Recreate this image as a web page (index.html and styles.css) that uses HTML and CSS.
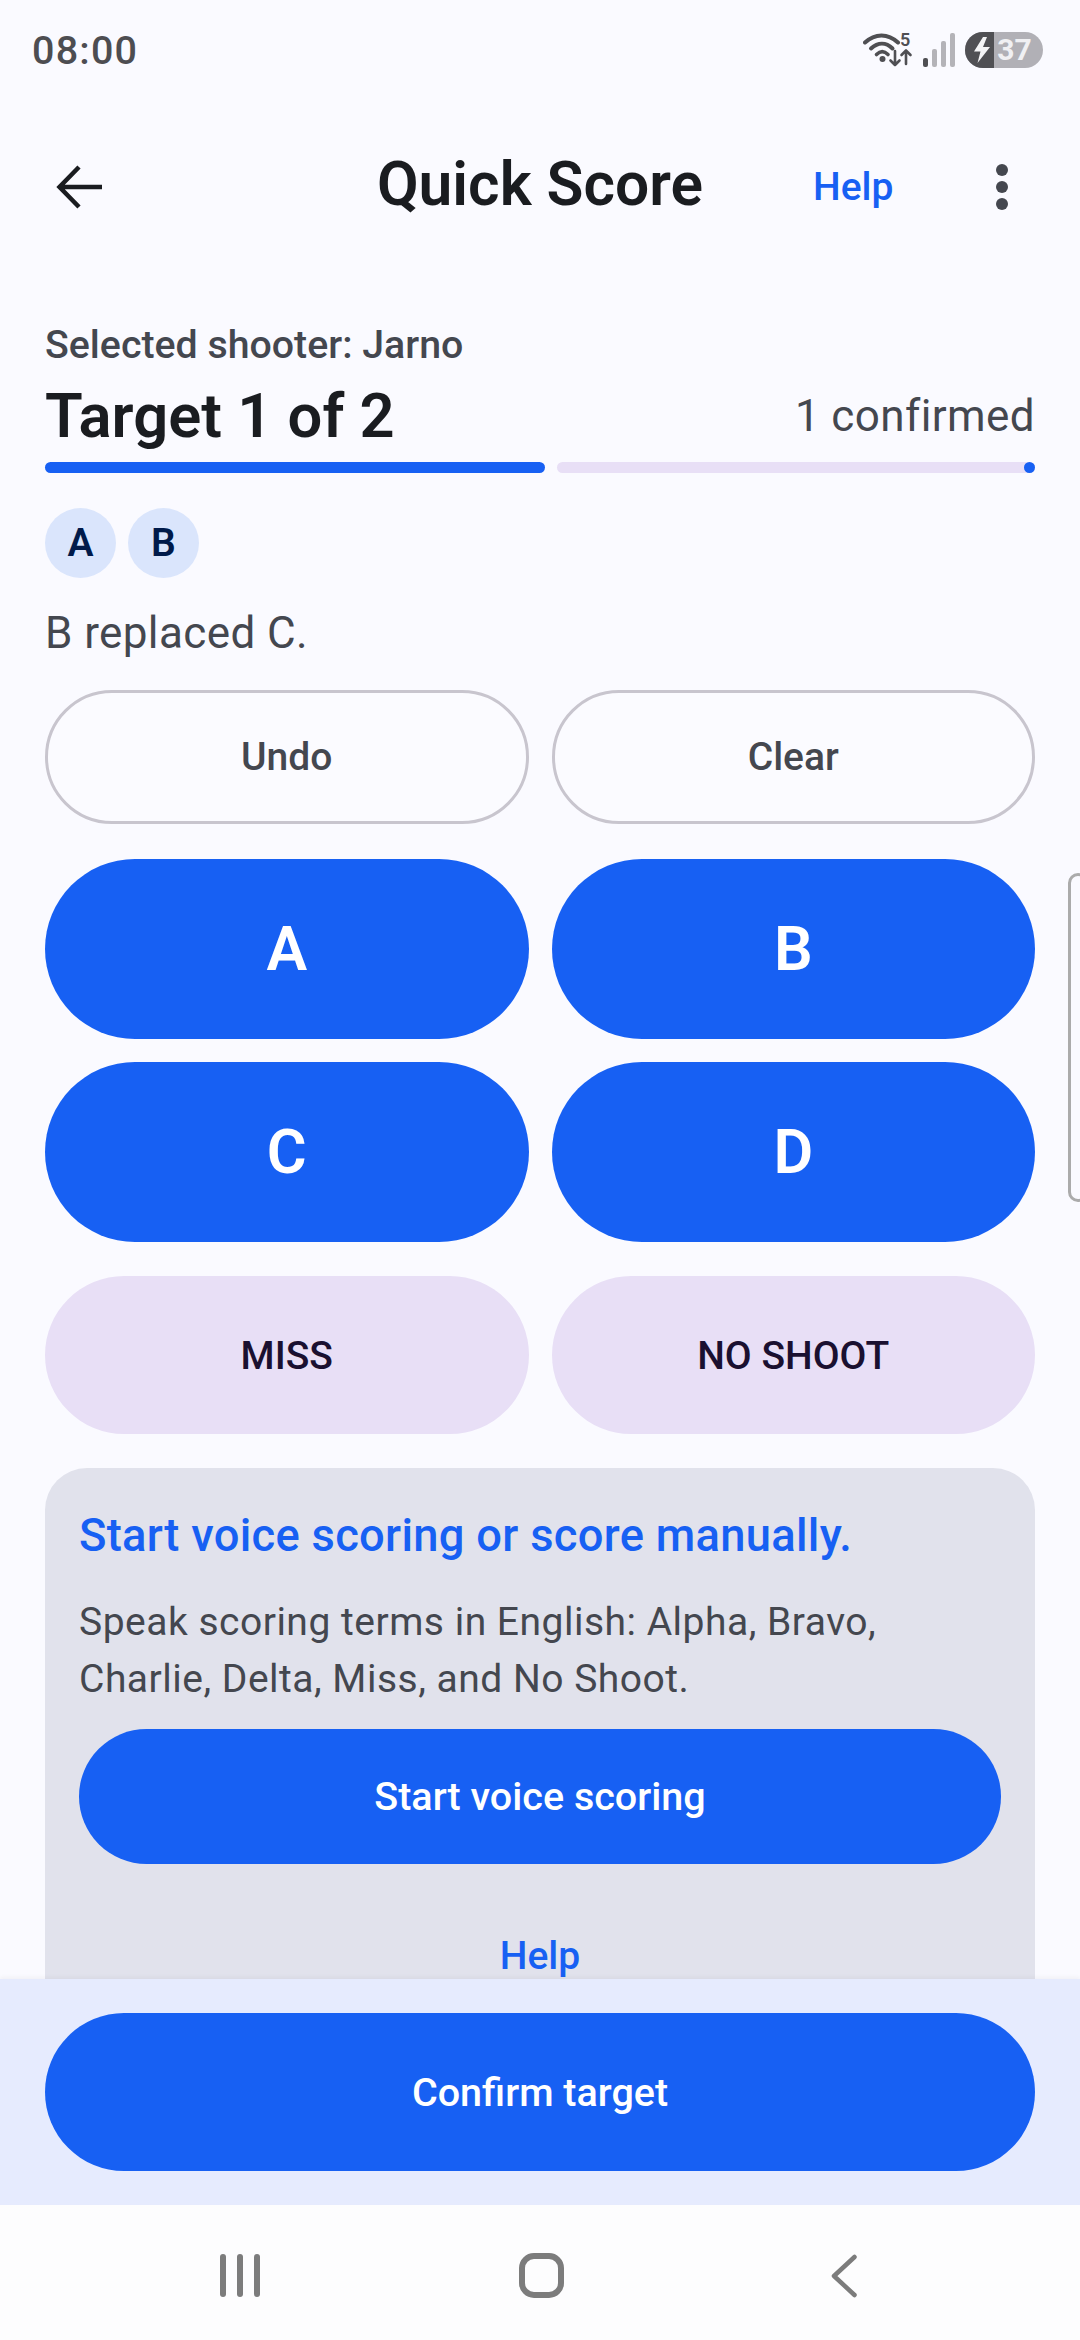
FILE: index.html
```html
<!DOCTYPE html>
<html lang="en">
<head>
<meta charset="utf-8">
<title>Quick Score</title>
<link rel="stylesheet" href="styles.css">
</head>
<body>
<div class="screen">
  <header class="status">
    <span class="clock">08:00</span>
    <div class="status-icons">
      <div class="wifi">
        <svg width="50" height="36" viewBox="0 0 50 36" fill="none">
          <path d="M2 10.500C12 1 25 1 35 10.500" stroke="#4f4f53" stroke-width="4" stroke-linecap="round"/>
          <path d="M8 16.500C15 10 23 10 29.500 16.500" stroke="#4f4f53" stroke-width="4" stroke-linecap="round"/>
          <path d="M13.500 22.500C17.500 18.500 21 18.500 25 22.500" stroke="#4f4f53" stroke-width="3.600" stroke-linecap="round"/>
          <circle cx="19.500" cy="27" r="3" fill="#4f4f53"/>
          <path d="M32 19V33M27.500 28.500L32 33L36.500 28.500" stroke="#4f4f53" stroke-width="2.600" stroke-linecap="round" stroke-linejoin="round"/>
          <path d="M43 32V18.500M38.500 23L43 18.500L47.500 23" stroke="#4f4f53" stroke-width="2.600" stroke-linecap="round" stroke-linejoin="round"/>
        </svg>
        <span class="wifi-gen">5</span>
      </div>
      <svg class="signal" width="32" height="34" viewBox="0 0 32 34">
        <rect x="0" y="25" width="5" height="9" rx="2" fill="#4f4f53"/>
        <rect x="9" y="16" width="5" height="18" rx="2" fill="#b4b3b8"/>
        <rect x="18" y="8" width="5" height="26" rx="2" fill="#b4b3b8"/>
        <rect x="27" y="0" width="5" height="34" rx="2" fill="#b4b3b8"/>
      </svg>
      <div class="battery">
        <div class="battery-charge">
          <svg width="18" height="26" viewBox="0 0 18 26"><path d="M10 0L1 14.500H7.500L4.500 26L17 10H10L14 0Z" fill="#f4f4f6"/></svg>
        </div>
        <span class="battery-level">37</span>
      </div>
    </div>
  </header>

  <nav class="topbar">
    <svg class="back" width="46" height="46" viewBox="0 0 46 46" fill="none">
      <path d="M46 23H4M23 3L3.500 23L23 43" stroke="#1a1c20" stroke-width="4.500" stroke-linejoin="miter"/>
    </svg>
    <h1 class="title">Quick Score</h1>
    <span class="top-help">Help</span>
    <div class="kebab"><i></i><i></i><i></i></div>
  </nav>

  <main class="content">
    <p class="shooter">Selected shooter: Jarno</p>
    <div class="target-row">
      <h2 class="target">Target 1 of 2</h2>
      <span class="confirmed">1 confirmed</span>
    </div>
    <div class="progress">
      <div class="progress-done"></div>
      <div class="progress-rest"><i></i></div>
    </div>
    <div class="chips">
      <span class="chip">A</span>
      <span class="chip">B</span>
    </div>
    <p class="note">B replaced C.</p>
    <div class="grid actions">
      <button class="btn outline">Undo</button>
      <button class="btn outline">Clear</button>
    </div>
    <div class="grid letters">
      <button class="btn letter">A</button>
      <button class="btn letter">B</button>
      <button class="btn letter">C</button>
      <button class="btn letter">D</button>
    </div>
    <div class="grid outcomes">
      <button class="btn tonal">MISS</button>
      <button class="btn tonal">NO SHOOT</button>
    </div>
    <section class="card">
      <h3 class="card-title">Start voice scoring or score manually.</h3>
      <p class="card-text">Speak scoring terms in English: Alpha, Bravo, Charlie, Delta, Miss, and No Shoot.</p>
      <button class="btn voice">Start voice scoring</button>
      <button class="card-help">Help</button>
    </section>
  </main>

  <footer class="action-bar">
    <button class="btn confirm">Confirm target</button>
  </footer>

  <div class="navbar">
    <div class="recents"><i></i><i></i><i></i></div>
    <div class="home"></div>
    <svg width="26" height="44" viewBox="0 0 26 44" fill="none"><path d="M23.500 3L3 22L23.500 41" stroke="#7c7c7c" stroke-width="4.500" stroke-linecap="round" stroke-linejoin="round"/></svg>
  </div>

  <div class="edge-handle"></div>
</div>
</body>
</html>
```
FILE: styles.css
```css
* { box-sizing: border-box; margin: 0; padding: 0; }
html, body { width: 1080px; height: 2340px; overflow: hidden; }
body { font-family: Roboto, "Noto Sans", sans-serif; background: #fafaff; color: #1a1c20; }
button { font-family: inherit; border: 0; background: none; }

.screen { position: relative; width: 1080px; height: 2340px; display: flex; flex-direction: column; }

.status { height: 100px; flex: none; display: flex; align-items: center; justify-content: space-between; padding: 0 37px 0 32px; }
.clock { font-size: 39.500px; font-weight: 500; letter-spacing: 1.200px; color: #4d4d51; }
.status-icons { display: flex; align-items: center; gap: 10px; }
.wifi { position: relative; width: 50px; height: 36px; }
.wifi svg { display: block; }
.wifi-gen { position: absolute; left: 37px; top: -1px; font-size: 18px; font-weight: 600; line-height: 18px; color: #4f4f53; }
.battery { width: 78px; height: 36px; border-radius: 18px; overflow: hidden; display: flex; background: #b1b0b6; }
.battery-charge { width: 29px; background: #505054; display: flex; align-items: center; justify-content: flex-end; padding-right: 3px; }
.battery-level { flex: 1; text-align: center; font-size: 30px; font-weight: 700; line-height: 36px; color: #f0f0f3; padding-right: 8px; }

.topbar { height: 168px; flex: none; position: relative; display: flex; align-items: center; padding: 5px 0 0 56px; }
.title { position: absolute; left: 0; right: 0; text-align: center; font-size: 60.500px; font-weight: 600; line-height: 70px; padding-bottom: 3px; }
.top-help { position: absolute; left: 813px; font-size: 39px; font-weight: 500; color: #1760f3; }
.kebab { position: absolute; left: 996px; display: flex; flex-direction: column; gap: 5px; }
.kebab i { display: block; width: 12px; height: 12px; border-radius: 50%; background: #44474f; }

.content { flex: 1; min-height: 0; overflow: hidden; padding: 55px 45px 0; }
.shooter { font-size: 39.300px; font-weight: 500; line-height: 44px; color: #44474f; }
.target-row { display: flex; justify-content: space-between; align-items: center; margin-top: 15px; height: 68px; }
.target { font-size: 61.500px; font-weight: 600; line-height: 68px; }
.confirmed { font-size: 44px; color: #44474f; letter-spacing: 0.4px; }
.progress { display: flex; gap: 12px; height: 11px; margin-top: 12px; }
.progress-done { width: 500px; background: #1760f3; border-radius: 6px; }
.progress-rest { flex: 1; background: #e8dff6; border-radius: 6px; display: flex; justify-content: flex-end; }
.progress-rest i { width: 11px; height: 11px; border-radius: 50%; background: #1760f3; }
.chips { display: flex; gap: 12px; margin-top: 35px; }
.chip { width: 71px; height: 70px; border-radius: 50%; background: #dae5fc; display: flex; align-items: center; justify-content: center; font-size: 39px; font-weight: 600; color: #001a4a; }
.note { font-size: 44px; line-height: 56px; color: #44474f; margin-top: 27px; letter-spacing: 0.4px; }

.grid { display: grid; grid-template-columns: 1fr 1fr; gap: 23px; }
.actions { margin-top: 29px; }
.letters { margin-top: 35px; }
.outcomes { margin-top: 34px; }
.btn { display: flex; align-items: center; justify-content: center; border-radius: 90px; }
.outline { height: 134px; border: 3px solid #c8c5ce; font-size: 39px; font-weight: 500; color: #44474f; background: #fbfbff; }
.letter { height: 180px; background: #1760f3; color: #fff; font-size: 61px; font-weight: 600; }
.tonal { height: 158px; background: #e8dff6; color: #1a1030; font-size: 39px; font-weight: 500; padding-top: 1px; }

.card { margin-top: 34px; background: #e1e2ec; border-radius: 42px; padding: 40px 34px 0; height: 560px; }
.card-title { font-size: 45.300px; font-weight: 500; line-height: 56px; color: #1760f3; letter-spacing: 0.3px; }
.card-text { font-size: 39px; line-height: 57px; color: #44474f; margin-top: 30px; letter-spacing: 0.5px; }
.voice { width: 100%; height: 135px; background: #1760f3; color: #fff; font-size: 39.500px; font-weight: 500; margin-top: 21px; }
.card-help { display: block; margin: 67px auto 0; font-size: 39px; font-weight: 500; line-height: 50px; color: #1760f3; }

.action-bar { height: 226px; flex: none; position: relative; background: #e6ebfe; padding: 34px 45px 0; box-shadow: 0 -2px 4px rgba(0, 0, 0, 0.04); }
.confirm { width: 100%; height: 158px; background: #1760f3; color: #fff; font-size: 39.500px; font-weight: 500; }

.navbar { height: 135px; flex: none; background: #fdfdfe; position: relative; display: flex; align-items: center; justify-content: space-between; padding: 6px 223px 0 220px; }
.recents { display: flex; gap: 11px; }
.recents i { display: block; width: 6px; height: 43px; border-radius: 3px; background: #7c7c7c; }
.home { width: 45px; height: 45px; border: 6px solid #7c7c7c; border-radius: 15px; margin-right: 8px; }

.edge-handle { position: absolute; left: 1068px; top: 873px; width: 20px; height: 329px; border: 3px solid #ababab; border-radius: 12px; }
```
